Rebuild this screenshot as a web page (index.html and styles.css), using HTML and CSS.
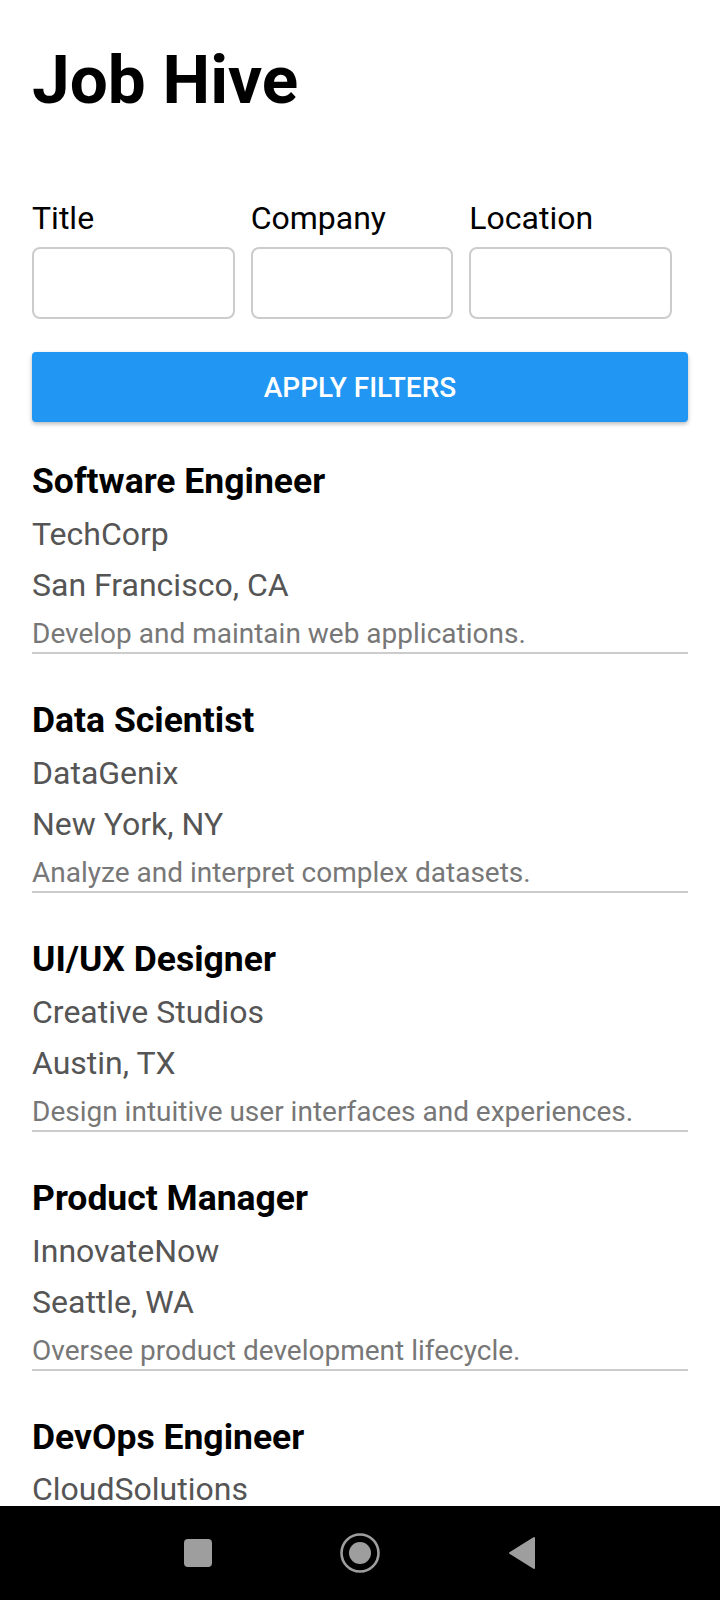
FILE: index.html
```html
<!DOCTYPE html>
<html lang="en">
<head>
<meta charset="utf-8">
<title>Job Hive</title>
<link rel="stylesheet" href="styles.css">
</head>
<body>
<div class="screen">
  <main class="content">
    <h1 class="app-title">Job Hive</h1>
    <div class="filters">
      <div class="field">
        <label class="field-label">Title</label>
        <div class="field-input"></div>
      </div>
      <div class="field">
        <label class="field-label">Company</label>
        <div class="field-input"></div>
      </div>
      <div class="field">
        <label class="field-label">Location</label>
        <div class="field-input"></div>
      </div>
    </div>
    <button class="apply-btn">APPLY FILTERS</button>
    <div class="job-list">
      <div class="job">
        <div class="job-title">Software Engineer</div>
        <div class="job-meta">TechCorp</div>
        <div class="job-meta">San Francisco, CA</div>
        <div class="job-desc">Develop and maintain web applications.</div>
      </div>
      <div class="job">
        <div class="job-title">Data Scientist</div>
        <div class="job-meta">DataGenix</div>
        <div class="job-meta">New York, NY</div>
        <div class="job-desc">Analyze and interpret complex datasets.</div>
      </div>
      <div class="job">
        <div class="job-title">UI/UX Designer</div>
        <div class="job-meta">Creative Studios</div>
        <div class="job-meta">Austin, TX</div>
        <div class="job-desc">Design intuitive user interfaces and experiences.</div>
      </div>
      <div class="job">
        <div class="job-title">Product Manager</div>
        <div class="job-meta">InnovateNow</div>
        <div class="job-meta">Seattle, WA</div>
        <div class="job-desc">Oversee product development lifecycle.</div>
      </div>
      <div class="job">
        <div class="job-title">DevOps Engineer</div>
        <div class="job-meta job-meta-last">CloudSolutions</div>
      </div>
    </div>
  </main>
  <nav class="navbar">
    <svg class="nav-icon" width="28" height="28" viewBox="0 0 28 28"><rect x="0" y="0" width="28" height="28" rx="4" fill="#9e9e9e"/></svg>
    <svg class="nav-icon" width="42" height="42" viewBox="0 0 42 42"><circle cx="21" cy="21" r="18.5" fill="none" stroke="#9e9e9e" stroke-width="2.6"/><circle cx="21" cy="21" r="11" fill="#9e9e9e"/></svg>
    <svg class="nav-icon" width="28" height="34" viewBox="0 0 28 34"><path d="M26 2 L26 32 L2 17 Z" fill="#9e9e9e" stroke="#9e9e9e" stroke-width="2" stroke-linejoin="round"/></svg>
  </nav>
</div>
</body>
</html>
```
FILE: styles.css
```css
html, body {
  margin: 0;
  padding: 0;
  background: #ffffff;
}
body {
  font-family: Roboto, "Liberation Sans", sans-serif;
  color: #000;
}
.screen {
  width: 720px;
  height: 1600px;
  display: flex;
  flex-direction: column;
  overflow: hidden;
}
.content {
  flex: 1;
  overflow: hidden;
  padding: 40px 32px 0 32px;
  min-height: 0;
}
.app-title {
  margin: 0;
  font-size: 67.5px;
  line-height: 80px;
  font-weight: 700;
  color: #000;
}
.filters {
  display: flex;
  margin-top: 79px;
}
.field {
  flex: 1;
  padding-right: 16px;
  display: flex;
  flex-direction: column;
}
.field-label {
  font-size: 32px;
  line-height: 38px;
  color: #000;
}
.field-input {
  margin-top: 10px;
  height: 68px;
  border: 2px solid #cccccc;
  border-radius: 8px;
  background: #fff;
}
.apply-btn {
  display: block;
  width: 100%;
  margin-top: 33px;
  height: 70px;
  border: none;
  border-radius: 4px;
  background: #2196f3;
  color: #fff;
  font-family: Roboto, "Liberation Sans", sans-serif;
  font-weight: 500;
  font-size: 28px;
  letter-spacing: 0;
  box-shadow: 0 2px 4px rgba(0, 0, 0, 0.28);
  padding: 0;
}
.job-list {
  margin-top: 39px;
}
.job {
  border-bottom: 2px solid #cccccc;
  padding-bottom: 2px;
  margin-bottom: 46px;
}
.job-title {
  font-size: 35.5px;
  line-height: 40px;
  font-weight: 700;
  color: #000;
  margin-bottom: 8px;
}
.job-meta {
  font-size: 32px;
  line-height: 51px;
  color: #555555;
}
.job-meta-last {
  line-height: 32px;
  padding-top: 8px;
}
.job-desc {
  margin-top: 7px;
  font-size: 28px;
  line-height: 32px;
  color: #777777;
}
.navbar {
  height: 94px;
  flex-shrink: 0;
  background: #000;
  display: flex;
  align-items: center;
  justify-content: center;
}
.nav-icon {
  display: block;
}
.navbar .nav-icon:nth-child(1) {
  margin-right: 127px;
}
.navbar .nav-icon:nth-child(2) {
  margin-right: 127px;
}
```
